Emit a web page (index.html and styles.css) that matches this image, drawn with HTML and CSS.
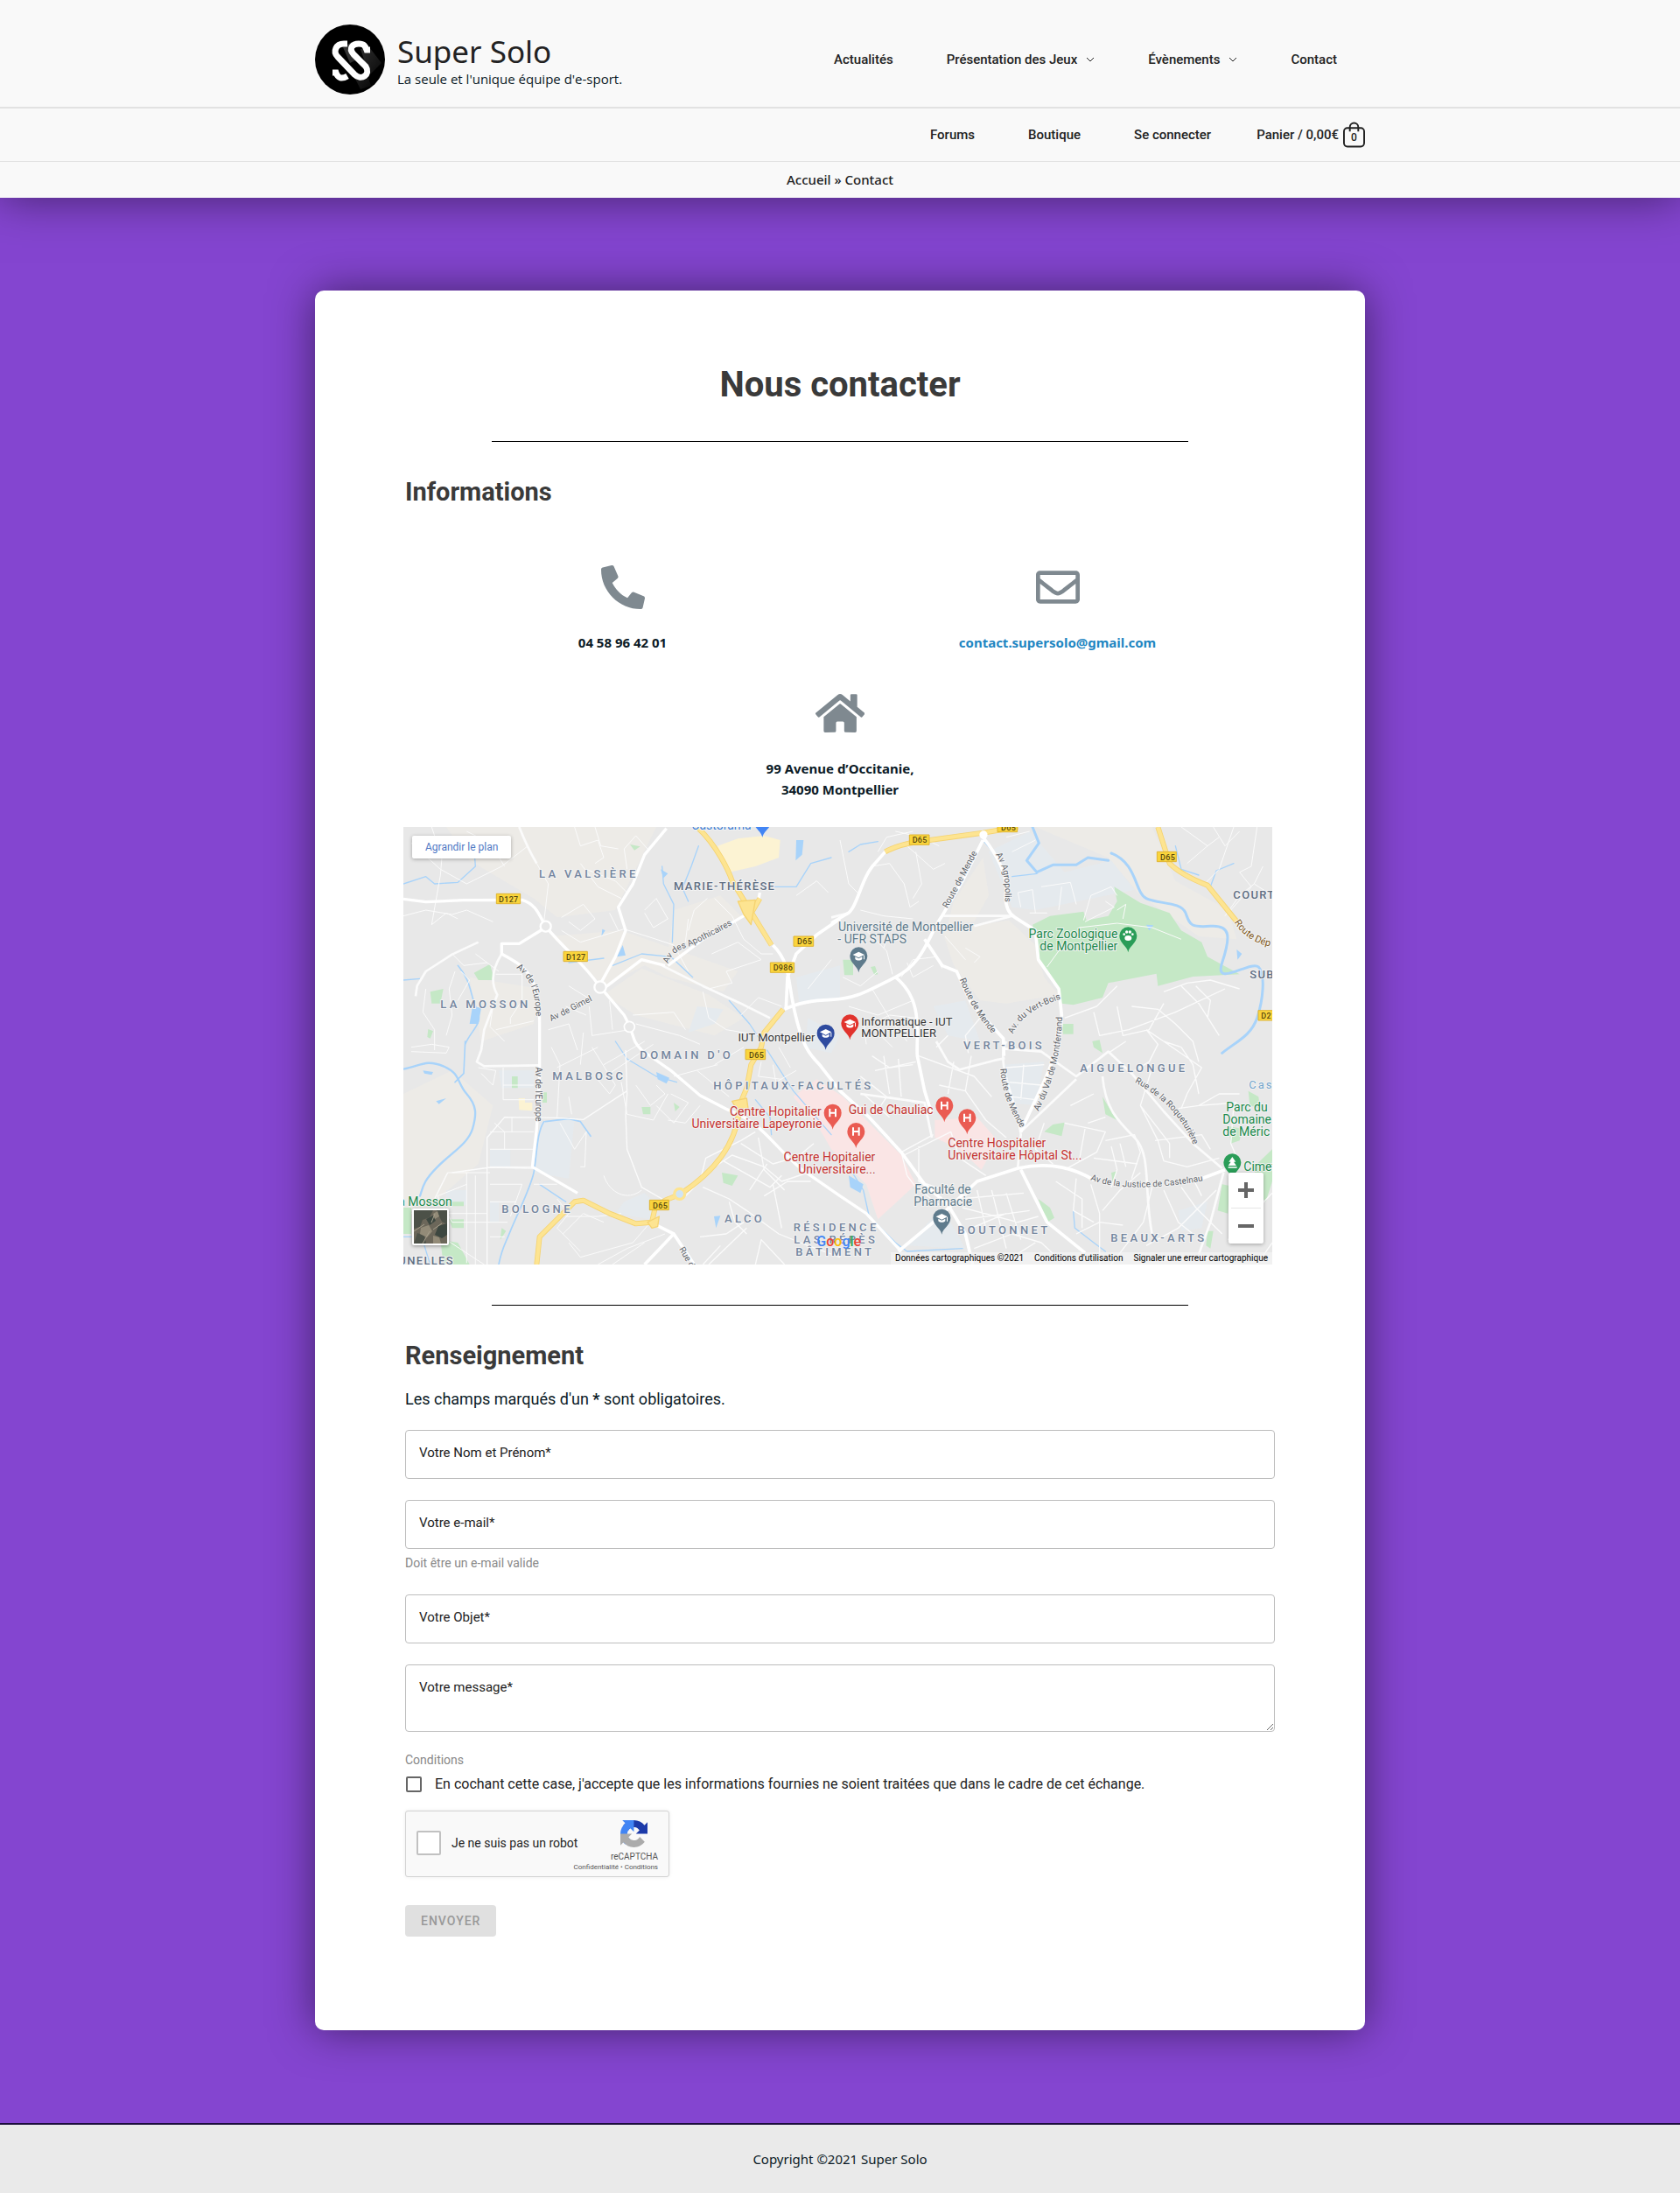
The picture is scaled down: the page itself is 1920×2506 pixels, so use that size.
FILE: index.html
```html
<!DOCTYPE html>
<html lang="fr">
<head>
<meta charset="utf-8">
<meta name="viewport" content="width=device-width, initial-scale=1">
<title>Contact – Super Solo</title>
<link rel="stylesheet" href="styles.css">
</head>
<body>
<header class="site-header">
  <div class="bar bar-main">
    <div class="wrap">
      <a class="brand" href="#">
        <svg class="brand-logo" viewBox="0 0 80 80" aria-hidden="true">
          <defs><linearGradient id="sheen" x1="0" y1="0" x2="1" y2="1"><stop offset=".2" stop-color="#555"/><stop offset="1" stop-color="#000"/></linearGradient></defs>
          <circle cx="40" cy="40" r="40"/>
          <path d="M32 26L42 20 48 40 40 44ZM52 28L62 26 76 44 62 58ZM46 62L60 58 64 70 52 74Z" fill="url(#sheen)" opacity=".6"/>
          <g fill="none" stroke="#fff" stroke-width="7">
            <path d="M37 22H33C24 22 20 31 26 37L45 57C53 65 64 57 58 48L44 34C38 27 43 22 50 22C56 22 57 24 59 29H63"/>
            <path d="M20 55H24C26 61 30 63 37 59"/>
          </g>
        </svg>
        <span class="brand-text"><span class="brand-name">Super Solo</span><span class="brand-tag">La seule et l'unique équipe d'e-sport.</span></span>
      </a>
      <nav class="menu" aria-label="Menu principal">
        <a href="#">Actualités</a>
        <a href="#">Présentation des Jeux <svg class="chevron" viewBox="0 0 10 10" aria-hidden="true"><path d="M1 3l4 4 4-4"/></svg></a>
        <a href="#">Évènements <svg class="chevron" viewBox="0 0 10 10" aria-hidden="true"><path d="M1 3l4 4 4-4"/></svg></a>
        <a href="#">Contact</a>
      </nav>
    </div>
  </div>
  <div class="bar bar-shop">
    <div class="wrap">
      <nav class="menu" aria-label="Menu secondaire">
        <a href="#">Forums</a>
        <a href="#">Boutique</a>
        <a href="#">Se connecter</a>
      </nav>
      <a class="cart" href="#">Panier / 0,00€
        <span class="bag"><svg viewBox="0 0 26 32" aria-hidden="true"><rect x="1" y="8" width="24" height="22" rx="4"/><path d="M8 12V7a5 5 0 0 1 10 0v5"/></svg><span class="bag-count">0</span></span>
      </a>
    </div>
  </div>
  <nav class="crumbs" aria-label="Fil d'Ariane"><a href="#">Accueil</a> » <span>Contact</span></nav>
</header>

<main class="page">
  <article class="card">
    <h1>Nous contacter</h1>
    <hr>
    <h2>Informations</h2>
    <div class="infos">
      <div class="info">
        <svg class="info-icon" viewBox="0 0 512 512" aria-hidden="true"><path d="M493.4 24.6l-104-24c-11.3-2.6-22.9 3.3-27.5 13.9l-48 112c-4.2 9.8-1.4 21.3 6.9 28l60.6 49.6c-36 76.7-98.9 140.5-177.2 177.2l-49.6-60.6c-6.8-8.3-18.2-11.1-28-6.9l-112 48C3.900 366.500-2 378.100.6 389.400l24 104C27.100 504.200 36.700 512 48 512c256.100 0 464-207.500 464-464 0-11.200-7.700-20.900-18.600-23.400z" transform="matrix(-1 0 0 1 512 0)"/></svg>
        <p>04 58 96 42 01</p>
      </div>
      <div class="info">
        <svg class="info-icon" viewBox="0 0 512 512" aria-hidden="true"><path d="M464 64H48C21.490 64 0 85.490 0 112v288c0 26.510 21.490 48 48 48h416c26.510 0 48-21.490 48-48V112c0-26.510-21.490-48-48-48zm0 48v40.805c-22.422 18.259-58.168 46.651-134.587 106.490-16.841 13.247-50.201 45.072-73.413 44.701-23.208.375-56.579-31.459-73.413-44.701C106.180 199.465 70.425 171.067 48 152.805V112h416zM48 400V214.398c22.914 18.251 55.409 43.862 104.938 82.646 21.857 17.205 60.134 55.186 103.062 54.955 42.717.231 80.509-37.199 103.053-54.947 49.528-38.783 82.032-64.401 104.947-82.653V400H48z"/></svg>
        <p><a href="mailto:contact.supersolo@gmail.com">contact.supersolo@gmail.com</a></p>
      </div>
      <address class="info info-wide">
        <svg class="info-icon" viewBox="0 0 576 512" aria-hidden="true"><path d="M280.370 148.260L96 300.110V464a16 16 0 0 0 16 16l112.060-.29a16 16 0 0 0 15.920-16V368a16 16 0 0 1 16-16h64a16 16 0 0 1 16 16v95.640a16 16 0 0 0 16 16.050L464 480a16 16 0 0 0 16-16V300L295.670 148.260a12.190 12.190 0 0 0-15.300 0zM571.600 251.470L488 182.560V44.050a12 12 0 0 0-12-12h-56a12 12 0 0 0-12 12v72.610L318.470 43a48 48 0 0 0-61 0L4.340 251.470a12 12 0 0 0-1.600 16.900l25.500 31A12 12 0 0 0 45.150 301l235.220-193.740a12.190 12.190 0 0 1 15.300 0L530.900 301a12 12 0 0 0 16.900-1.600l25.500-31a12 12 0 0 0-1.700-16.930z"/></svg>
        <p>99 Avenue d’Occitanie,<br>34090 Montpellier</p>
      </address>
    </div>

    <section class="map" aria-label="Plan d'accès">
      <svg class="map-canvas" viewBox="33 45 2979 1500" preserveAspectRatio="xMidYMid slice" role="img" aria-label="Carte de Montpellier">
        <defs>
          <path id="pin" d="M0 57C-4 34-30 26-30 0a30 30 0 1 1 60 0C30 26 4 34 0 57Z"/>
          <g id="cap"><path d="M0-14L20-4 0 6-20-4Z"/><path d="M-12 3L0 9 12 3V11C6 17-6 17-12 11ZM17-2h3v14h-3z"/></g>
          <path id="p-gimel" d="M540 712L690 636"/>
          <path id="p-apo" d="M940 514Q955 470 1010 456Q1090 420 1160 380"/>
          <path id="p-eur1" d="M420 528Q485 570 488 690"/>
          <path id="p-eur2" d="M486 868V1070"/>
          <path id="p-mende1" d="M1898 325Q1950 230 2002 130"/>
          <path id="p-agro" d="M2064 140Q2100 190 2096 300"/>
          <path id="p-mende2" d="M1940 568Q1985 680 2062 765"/>
          <path id="p-bois" d="M2124 755Q2150 680 2285 635"/>
          <path id="p-mont" d="M2210 1020Q2290 870 2292 680"/>
          <path id="p-mende3" d="M2080 874Q2085 980 2158 1090"/>
          <path id="p-roq" d="M2540 920Q2690 1000 2744 1140"/>
          <path id="p-cast" d="M2388 1255Q2520 1305 2790 1255"/>
          <path id="p-dep" d="M2882 372Q2930 450 3040 460"/>
          <path id="p-rue" d="M978 1492L1040 1600"/>
        </defs>
        <rect x="33" y="45" width="2979" height="1500" fill="#e8e8e8"/>
        <g fill="#edebe7">
          <path d="M180 45H900L810 230 760 330 560 355 480 290 260 160Z"/>
          <path d="M540 420L780 400 1180 540 1130 610 940 560 860 520 720 590Z"/>
          <path d="M960 330L1120 280 1190 350 940 480Z"/>
          <path d="M720 620L850 530 1080 620 1200 700 1100 760 830 690Z"/>
          <path d="M33 960L200 880 340 1000 290 1200 60 1400H33Z"/>
          <path d="M1880 400L2110 365 2200 450 2230 560 2280 620 2100 650 2010 640 1920 520Z"/>
          <path d="M2200 45H2600L2680 230 2860 330 2890 430 2760 420 2560 280 2450 150Z"/>
          <path d="M1920 300L2020 150 2040 280 1990 370 1900 380Z"/>
          <path d="M260 560L500 600 480 720 300 780Z"/>
        </g>
        <g fill="#e5eaee">
          <path d="M2040 130L2180 60 2300 200 2460 160 2540 260 2200 330 2120 320Z"/>
          <path d="M500 1060L620 1040 600 1250 480 1230Z"/>
          <path d="M330 1150H400V1210H330ZM180 1290H250V1340H180ZM330 1330H360V1400H330Z"/>
          <path d="M790 1330L860 1300 900 1340 880 1390 760 1370Z"/>
          <path d="M1380 560L1530 520V640L1390 650Z"/>
          <path d="M1850 660L1960 640 2010 780 1900 760Z"/>
          <path d="M2090 860L2230 850 2200 1000 2110 990Z"/>
          <path d="M1760 1480L1880 1350 1960 1490Z"/>
          <path d="M2690 1360L2790 1330 2770 1420 2700 1430Z"/>
          <path d="M1420 700L1530 760 1500 820 1410 800ZM1040 660L1130 670 1100 720 1010 750ZM360 880H480V940H370Z"/>
        </g>
        <g fill="#c5e8c6">
          <path d="M2470 250L2560 305 2660 340 2700 400 2770 440 2790 490 2900 550 2740 558 2620 590 2615 548 2450 580 2430 630 2330 655 2290 650 2270 590 2210 500 2205 440 2190 380 2250 350 2365 335 2375 365 2450 350 2480 300Z"/>
          <path d="M275 545L330 515 345 570 290 570ZM125 610L170 600 160 650 130 650ZM118 738L135 745 125 770 115 765ZM810 105L845 112 825 125Z"/>
          <path d="M1540 500H1575V553H1545ZM1635 525L1650 522 1660 550 1648 552ZM2290 720H2330V755H2295ZM2395 780L2420 775 2430 820 2400 800Z"/>
          <path d="M405 900H425V940H405ZM510 955H525V990H510ZM850 1005H880V1030H855ZM960 990L980 1005 965 1020ZM1125 1230L1180 1240 1160 1275 1130 1265Z"/>
          <path d="M33 1350H60V1440H33ZM180 1330H240V1345H180ZM160 1460L220 1470 260 1545H170ZM190 1390H240V1420H200ZM370 1420L385 1430 365 1460Z"/>
          <path d="M2430 970L2460 1020 2480 1050 2440 1030ZM2260 1065L2300 1058 2290 1105 2230 1090ZM2460 1230L2480 1225 2465 1265ZM2210 1320L2250 1350 2265 1385 2240 1400ZM2790 1430H2810L2800 1490 2785 1480Z"/>
          <path d="M2950 1210L3012 1150V1260L2990 1330 2960 1300ZM2840 1270L2865 1275 2860 1370 2825 1360ZM2860 1070L2910 1080 2900 1120 2870 1130ZM2930 950L2965 970 2970 1010 2935 1000Z"/>
        </g>
        <path d="M1370 970L1450 910 1540 970 1740 1170 1790 1270 1660 1390 1620 1270 1500 1150 1460 1080ZM1855 1050L2000 1040 2070 1120 2015 1220 1940 1150 1855 1110Z" fill="#fae5e5"/>
        <path d="M1110 110L1180 85 1270 75 1325 90 1320 150 1240 180 1150 200 1120 150ZM428 975L450 975 450 990 475 990 475 1018 430 1015Z" fill="#fcf3d3"/>
        <g fill="none" stroke="#a8d3fa" stroke-linejoin="round" stroke-linecap="round">
          <path stroke-width="9" d="M2190 45L2212 100 2170 160 2205 200 2260 175 2340 175 2380 150 2450 160M2460 135C2550 170 2540 270 2580 290S2700 300 2715 340 2730 390 2800 385 2870 420 2840 510 2940 500 2965 525 2980 640 2960 700 2890 780 2840 820 2835 875L2900 890 2940 895 2990 960 3000 1040 3012 1130"/>
          <path stroke-width="7" d="M33 875C90 865 110 840 170 865S215 920 250 960 285 1030 270 1080 200 1160 150 1210 100 1280 90 1310"/>
          <path stroke-width="5" d="M245 780L240 890 210 920M220 520C270 580 260 620 285 670S265 740 245 790M515 1055C490 1090 490 1180 480 1230S420 1380 400 1430 370 1490 360 1545M520 1055L600 1045 640 1055 675 1105"/>
          <path stroke-width="4" d="M33 240L110 215 140 240 220 235 280 180 275 110M33 570L90 565M920 180L925 240 960 310 955 440M1010 300L990 255 1020 180 1045 110M1290 250L1380 250 1430 170 1500 150M750 520L850 480 950 490 1025 560M600 510L720 495M1150 640L1220 720 1260 780M1560 130L1600 105 1660 95M2020 90L2080 160M2120 215L2205 205M2680 110L2700 190 2760 210M2800 250L2820 195 2880 170M1560 1210L1610 1290 1630 1380 1720 1470 1760 1500 1950 1490M2330 1360L2335 1420 2400 1470 2440 1500M1500 1100L1370 950 1280 810M760 780L800 840 900 900 970 920M500 1270L590 1330M33 1450H60M105 1480L125 1545M1240 980L1290 1040 1295 1100"/>
        </g>
        <path d="M1380 90H1405L1400 140 1378 160ZM270 660L300 665 290 720 260 720ZM785 450L795 485 765 490ZM2890 465L2908 480 2893 500ZM100 880L135 885 130 895 105 890ZM145 985L180 975 155 995ZM900 885L945 905 935 925 905 910ZM1560 1240L1610 1270 1600 1300 1565 1280ZM1098 1380L1120 1378 1105 1420ZM915 190L940 205 925 220ZM2580 380L2605 382 2590 400ZM715 395L725 400 712 420Z" fill="#a8d3fa"/>
        <g fill="none" stroke="#fbfbfb" stroke-linejoin="round">
          <path stroke-width="3" d="M130 45L165 150 160 210 130 380 180 340 220 360M60 100L160 190 250 240 330 200 370 180 460 110M380 180L330 100 250 60M490 170L530 240 515 370M575 355L650 310 690 360 640 400 600 370M620 45L640 110 700 90 720 150 690 170M640 170L700 250 780 290M660 190L760 230 800 270M690 45L710 110 770 120M800 190L790 120 830 75 870 120M740 340L770 400M33 350L110 330 200 345 250 330 340 370M575 400L640 440 790 395 900 430 960 450 1010 540M860 330L900 290 940 360 890 390 860 340M1010 360L1000 440M1075 290L1030 330 1010 400M1100 290L1160 350 1200 430 1260 480 1300 480M1090 480L1180 440 1260 500 1140 540 1160 580 1080 600M1380 280L1450 230 1490 270M1500 500L1420 600M280 480L360 540M200 480L240 520 320 510M110 600L100 680 140 740 140 810M210 540L190 600 200 690 180 760M220 640L260 570 230 540M350 550L440 550 440 640 400 700 400 720M350 740L480 710M340 660L330 730 380 780M600 590L680 640M590 660L660 690M670 660L680 760 810 740M740 640L750 740M530 740L600 720 630 810M650 750L640 860M820 690L960 680 1000 740M830 720L980 760 1050 790M1060 610L1080 700 1140 740 1260 760M1190 690L1250 630 1330 660"/>
          <path stroke-width="3" d="M60 800L130 790 190 800 180 820 60 815M290 870L350 880 340 930 300 890M375 870V980H480M375 930H480M540 800L570 860 560 1040M560 870L700 800M600 970L610 1030M680 800L760 930 740 960 690 900M720 860L860 780M740 890L890 790M780 920L800 1030 890 1050 940 960M830 930L880 1000 930 960 900 930M900 1000L960 1060 1010 990 950 960M940 1050L1000 1060 1050 1000M960 900L1110 860M1040 880L1150 970M1100 860L1200 800M1260 850L1250 900 1330 910M1300 860L1310 920 1380 880M1320 800L1360 870M570 1060L620 1150 660 1090 655 1210 640 1210M330 1090L480 1090M345 1060L380 1090 380 1150M405 1040V1090M330 1150H480M330 1210H470M185 1230H330M250 1230V1540M150 1310L250 1270M150 1310L200 1400H330M60 1370H320M280 1240V1545M330 1270L440 1270 400 1380M330 1330H420M330 1400H390M330 1450H380M180 1460L310 1545M480 1270H560M590 1380L700 1380 780 1370M580 1440L650 1370 720 1400M600 1470L640 1520 820 1470 880 1400M700 1545L800 1490 930 1440M750 1545L860 1470M560 1320L600 1370 560 1420 640 1500M720 1240C740 1300 800 1330 850 1290"/>
          <path stroke-width="4" d="M795 810L800 960 795 1030 800 1150 850 1280 920 1320M320 1545L320 1110 380 1040 560 1042 650 1048 800 950M185 1230L150 1300 140 1320M200 1230L330 1212 480 1215M1000 1310L1050 1260 1070 1180 1190 1120 1240 1090M1060 1280L1150 1320 1210 1360 1320 1440 1420 1480 1530 1520M1150 1330L1170 1400 1210 1440M1100 1210L1160 1170 1270 1210 1330 1260 1420 1230M1130 1190L1290 1280 1330 1240M1190 1130L1300 1200 1370 1180M1220 1290L1280 1200M1250 1110L1270 1220 1340 1290M1270 1310L1350 1260 1430 1260M1380 1180L1440 1130M1300 1270L1330 1420M1210 1420L1080 1545M1050 1450L1140 1440 1200 1400M1060 1545L1120 1480M1240 1545L1260 1460 1340 1545"/>
          <path stroke-width="3" d="M1530 90L1560 240 1590 270M1640 180L1700 170 1750 240 1770 320 1800 300M1660 130L1690 80 1780 60M1720 60L1810 80 1870 110M1760 110L1850 190 1890 170M1790 130L1810 240 1780 290M1600 330L1680 350 1780 360M1620 400L1690 470 1710 550M1700 400L1680 460M1740 560L1780 500 1860 490 1880 530M1760 510L1780 560 1850 520M1890 420L1960 500M1960 460L2010 490 1990 510M1540 560L1600 590 1660 540M1640 600L1700 700 1760 780M1560 660L1660 690 1780 640M1640 720L1700 690 1790 700M1610 700L1620 790M1660 750L1710 800M2100 80L2180 60M2120 130L2200 90M2150 320L2140 270 2190 260 2200 340M2220 250L2320 235 2340 310M2290 250L2280 330M2180 340H2240M2365 365L2390 280 2460 250 2480 280M2370 370L2470 320 2440 300M2350 390L2480 375 2600 390 2700 430M2240 525L2280 470 2300 460M2500 360L2510 310 2480 330M2700 45L2790 110 2720 170M2790 110L2830 80M2810 45L2850 110 2900 60M2880 45L2830 190 2780 240M2850 350L2900 280 2950 240M2960 45L2940 180 2900 200 2940 250 2870 330M2980 180L2950 240 3012 280"/>
          <path stroke-width="4" d="M2300 700L2410 660 2480 590M2400 680L2420 760 2520 740 2680 680 2850 600M2480 660L2500 760 2590 740 2640 650M2530 660L2620 670 2680 720 2740 780 2760 850M2580 740L2640 780 2700 800M2700 590L2760 650 2830 760M2750 590L2800 640 2790 700M2640 610L2720 580 2800 570 2900 600M2640 780L2770 870 2720 960 2700 1010M2700 800L2740 860 2760 960M2510 780L2450 820M2580 740L2620 790 2590 850 2540 880M2010 700L1960 760 1970 820M1860 800L1900 760M1640 830L1700 870 1780 860M1650 880L1790 850M1680 830L1700 960M1730 840L1740 970M1600 900L1690 970 1800 990M1610 960L1700 1040M1640 930L1690 970 1670 1000M1800 830L1990 900 2050 970M1870 930L1960 950 2030 1050 2100 1110M1920 850L1900 960M1980 830L1960 950M1850 1100L1740 1160 1760 1240M1750 1170L1910 1090 1940 1180 2030 1240M1800 1140V1260L1890 1290M2100 870L2230 860M2110 920L2220 930M2120 970L2200 980M2160 860L2150 980"/>
          <path stroke-width="4" d="M2300 1060L2440 1090 2410 1160 2300 1220M2230 1060L2200 1150 2260 1200M2320 1000L2400 960M2370 1080L2350 1190M2440 1120L2540 1100 2560 1160 2530 1250M2400 1180L2550 1200M2460 1140L2480 1220 2460 1280M2490 1130L2510 1210M2380 1060L2440 1040M2340 1250L2330 1360 2400 1400M2390 1270L2420 1370 2420 1545M2270 1260L2360 1320 2360 1420M2600 870L2560 1000 2620 1120 2640 1190 2720 1210 2830 1180M2560 1000L2660 1130 2660 1180M2610 1120L2770 1100 2800 1150M2690 1010L2760 1000 2890 990M2760 1000L2830 960 2900 960M2880 1000L2870 1130 2900 1200M2600 1280L2570 1400 2460 1545M2560 1230L2490 1290 2430 1360M2580 1480L2690 1420 2820 1290M2640 1290L2690 1400 2740 1440M2700 1280L2750 1350 2840 1440M2740 1250L2770 1310M1940 1320L2160 1300M1950 1350L2140 1400 2210 1380M1960 1390L2180 1360M1980 1420L2100 1370M2000 1290L2030 1420M2050 1290L2100 1490M2100 1300L2150 1460M1940 1330L1980 1290M1870 1340L1790 1280 1760 1240M1990 1490L2120 1440 2220 1470 2300 1545M2080 1545L2200 1470M2500 1410L2420 1400 2340 1440M2860 1460L3012 1300M2960 1545L3012 1470"/>
          <path stroke-width="8" d="M290 440L200 482 110 540 80 590 75 625M430 45Q460 120 490 170M920 520L1060 590 1200 655 1290 700M370 480Q320 560 355 620L310 740 300 810 285 850 310 865 500 862M1885 350L2120 350M2120 350L1990 385M1500 355L1560 340M1860 780L1900 850 1940 877 2060 845 2095 838M2090 805L2220 815 2340 900 2450 815 2530 890 2640 1020 2740 1130 2840 1215M2430 900C2440 1010 2480 1050 2540 1110S2570 1290 2600 1440M2150 1090L2340 910M2100 780C2060 860 2140 990 2150 1100L2140 1210M2845 1230L2800 1400 2760 1510M1600 960L1820 990 1845 1110"/>
          <path stroke-width="10" stroke="#fff" d="M33 292L110 302 240 296 440 295C490 310 500 350 520 385M520 385C600 480 640 500 705 590L790 690C830 760 810 770 850 810L950 880 1050 965 1140 1012C1270 1060 1290 1130 1400 1220L1530 1310 1620 1370 1740 1500M935 50L860 140 820 240 770 320 795 400 760 490 710 580M520 390L430 445H370V480C440 520 500 540 500 720V900L490 1080 475 1210 630 1300M705 610L850 500 930 520M940 520L1060 430 1200 350 1250 300 1255 270"/>
          <path stroke-width="11" stroke="#fff" d="M1300 450C1360 510 1350 570 1375 680S1420 820 1460 860L1530 950 1630 1040 1740 1160 1820 1270 1900 1340 1960 1440 1985 1545M1530 360L1450 415 1380 480 1350 560 1345 665M1340 670Q1400 640 1500 637C1580 635 1620 610 1720 560S1830 420 1880 350L1950 230 2020 90M1500 375L1550 345C1590 330 1600 220 1650 170L1685 130M2020 80Q2100 180 2100 260 2090 330 2130 355L2200 400 2210 500 2280 600 2290 690C2290 830 2200 970 2150 1090M1820 430L1880 520 1930 540 1980 650 2090 770 2092 830M1720 560C1820 640 1790 760 1795 830L1820 950 1845 1030M1730 1500L1850 1400 2000 1260 2140 1215C2260 1190 2340 1220 2400 1255M2770 1250L2850 1220M2150 1220L2240 1400 2370 1505M880 1400L960 1440 1030 1545M960 1440L860 1545"/>
        </g>
        <g fill="none" stroke-linejoin="round">
          <path stroke="#f5d371" stroke-width="18" d="M1040 45C1110 110 1150 200 1160 230L1215 320 1295 450M1255 290L1220 350M1335 670L1270 750 1260 800 1225 860 1210 940 1185 1000C1180 1140 1080 1240 980 1305L930 1325 895 1355 885 1400 830 1405 740 1370 650 1325 620 1330 500 1450 490 1545M1685 130Q1730 105 1800 95L2020 65 2140 45M2620 45L2660 170Q2700 210 2790 245L2895 375"/>
          <path stroke="#fde491" stroke-width="13" d="M1040 45C1110 110 1150 200 1160 230L1215 320 1295 450M1255 290L1220 350M1335 670L1270 750 1260 800 1225 860 1210 940 1185 1000C1180 1140 1080 1240 980 1305L930 1325 895 1355 885 1400 830 1405 740 1370 650 1325 620 1330 500 1450 490 1545M1685 130Q1730 105 1800 95L2020 65 2140 45M2620 45L2660 170Q2700 210 2790 245L2895 375"/>
          <path stroke="#f5d371" fill="#fde491" stroke-width="4" d="M1180 300L1240 295 1225 380 1200 345ZM1160 985L1210 975 1215 1010 1180 1020ZM870 1400L910 1380 905 1415 885 1420Z"/>
          <circle cx="980" cy="1303" r="18" stroke="#fde491" stroke-width="10" fill="#cfe4f5"/>
          <circle cx="521" cy="386" r="18" stroke="#fff" stroke-width="7" fill="#e8e8e8"/>
          <circle cx="708" cy="594" r="20" stroke="#fff" stroke-width="7" fill="#e8e8e8"/>
          <circle cx="808" cy="730" r="18" stroke="#fff" stroke-width="5" fill="#e8e8e8"/>
          <circle cx="2022" cy="72" r="14" fill="#fff"/>
        </g>
        <g fill="#fad53c" stroke="#dfb432" stroke-width="3">
          <path d="M352 274h82v34h-82zM582 472h82v34h-82zM1371 420h68v34h-68zM1291 510h82v34h-82zM1768 72h68v34h-68zM2070 30h68v32h-68zM2617 130h66v34h-66zM2964 674h66v34h-66zM1206 808h68v34h-68zM877 1324h66v34h-66z"/>
        </g>
        <g class="lbl-road">
          <text x="360" y="302">D127</text><text x="591" y="500">D127</text><text x="1383" y="448">D65</text><text x="1301" y="538">D986</text>
          <text x="1778" y="100">D65</text><text x="2082" y="56">D65</text><text x="2628" y="158">D65</text><text x="2974" y="702">D21</text>
          <text x="1218" y="836">D65</text><text x="888" y="1352">D65</text>
        </g>
        <g class="lbl-street">
          <text><textPath href="#p-gimel">Av de Gimel</textPath></text>
          <text><textPath href="#p-apo">Av des Apothicaires</textPath></text>
          <text><textPath href="#p-eur1">Av de l'Europe</textPath></text>
          <text><textPath href="#p-eur2">Av de l'Europe</textPath></text>
          <text><textPath href="#p-mende1">Route de Mende</textPath></text>
          <text><textPath href="#p-agro">Av Agropolis</textPath></text>
          <text><textPath href="#p-mende2">Route de Mende</textPath></text>
          <text><textPath href="#p-bois">Av. du Vert-Bois</textPath></text>
          <text><textPath href="#p-mont">Av du Val de Montferrand</textPath></text>
          <text><textPath href="#p-mende3">Route de Mende</textPath></text>
          <text><textPath href="#p-roq">Rue de la Roqueturière</textPath></text>
          <text><textPath href="#p-cast">Av de la Justice de Castelnau</textPath></text>
          <text><textPath href="#p-rue">Rue de</textPath></text>
          <text class="brown"><textPath href="#p-dep">Route Dép</textPath></text>
        </g>
        <g class="lbl-area">
          <text x="498" y="219">LA VALSIÈRE</text>
          <text x="160" y="666">LA MOSSON</text>
          <text x="844" y="840">DOMAIN D'O</text>
          <text x="544" y="912">MALBOSC</text>
          <text x="1096" y="946">HÔPITAUX-FACULTÉS</text>
          <text x="370" y="1368">BOLOGNE</text>
          <text x="1134" y="1402">ALCO</text>
          <text x="1370" y="1431">RÉSIDENCE</text>
          <text x="1372" y="1473">LAS RÉPÈS</text>
          <text x="1378" y="1515">BÂTIMENT</text>
          <text x="1953" y="807">VERT-BOIS</text>
          <text x="2353" y="885">AIGUELONGUE</text>
          <text x="1933" y="1440">BOUTONNET</text>
          <text x="2458" y="1467">BEAUX-ARTS</text>
          <g class="town">
            <text x="960" y="260">MARIE-THÉRÈSE</text>
            <text x="2878" y="290">COURTARELLE</text>
            <text x="2935" y="563">SUBSTANTION</text>
            <text x="207" y="1544" text-anchor="end">BRUNELLES</text>
          </g>
          <text class="soft" x="2932" y="942">Cast</text>
        </g>
        <g class="lbl-place">
          <g fill="#5f7b8c"><text x="1524" y="402">Université de Montpellier</text><text x="1522" y="443">- UFR STAPS</text><text x="1786" y="1302">Faculté de</text><text x="1783" y="1344">Pharmacie</text></g>
          <g fill="#1b8a4c"><text x="2482" y="425" text-anchor="end">Parc Zoologique</text><text x="2482" y="468" text-anchor="end">de Montpellier</text><text x="2854" y="1020">Parc du</text><text x="2842" y="1062">Domaine</text><text x="2842" y="1104">de Méric</text><text x="2914" y="1223">Cimetière</text><text x="200" y="1343" text-anchor="end">La Mosson</text></g>
          <g fill="#c5322f"><text x="1466" y="1034" text-anchor="end">Centre Hopitalier</text><text x="1468" y="1077" text-anchor="end">Universitaire Lapeyronie</text><text x="1651" y="1191" text-anchor="end">Centre Hopitalier</text><text x="1652" y="1233" text-anchor="end">Universitaire...</text><text x="1850" y="1028" text-anchor="end">Gui de Chauliac</text><text x="1900" y="1143">Centre Hospitalier</text><text x="1900" y="1184">Universitaire Hôpital St...</text></g>
          <g class="near" fill="#333"><text x="1444" y="780" text-anchor="end">IUT Montpellier</text><text x="1603" y="725">Informatique - IUT</text><text x="1603" y="766">MONTPELLIER</text></g>
          <text x="1226" y="54" text-anchor="end" fill="#3f7fd4">Castorama</text>
        </g>
        <use href="#pin" x="1264" y="24" fill="#4285f4"/>
        <use href="#pin" x="1481" y="752" fill="#2f4b9f"/>
        <use href="#pin" x="1564" y="718" fill="#e1332d"/>
        <g fill="#5f7b8c"><use href="#pin" x="1594" y="487"/><use href="#pin" x="1879" y="1385"/></g>
        <g fill="#2a9d58"><use href="#pin" x="2518" y="418"/><use href="#pin" x="2875" y="1195"/></g>
        <g fill="#ea5b52"><use href="#pin" x="1505" y="1025"/><use href="#pin" x="1585" y="1089"/><use href="#pin" x="1888" y="1000"/><use href="#pin" x="1966" y="1042"/></g>
        <g fill="#fff">
          <use href="#cap" x="1481" y="752"/><use href="#cap" x="1564" y="718"/><use href="#cap" x="1594" y="487"/><use href="#cap" x="1879" y="1385"/>
          <path d="M2875 1176l12 17h-7l9 13h-28l9-13h-7zM2861 1210h30v4h-30z"/>
          <ellipse cx="2518" cy="426" rx="12" ry="9"/><circle cx="2504" cy="413" r="4"/><circle cx="2513" cy="405" r="5"/><circle cx="2524" cy="405" r="5"/><circle cx="2533" cy="413" r="4"/>
        </g>
        <path fill="none" stroke="#fff" stroke-width="6" d="M1495 1011v28M1515 1011v28M1495 1025h20M1575 1075v28M1595 1075v28M1575 1089h20M1878 986v28M1898 986v28M1878 1000h20M1956 1028v28M1976 1028v28M1956 1042h20"/>
        <text class="google" x="1450" y="1481"><tspan fill="#4285f4">G</tspan><tspan fill="#ea4335">o</tspan><tspan fill="#fbbc05">o</tspan><tspan fill="#4285f4">g</tspan><tspan fill="#34a853">l</tspan><tspan fill="#ea4335">e</tspan></text>
      </svg>
      <a class="map-open" href="#">Agrandir le plan</a>
      <button class="map-sat" type="button" aria-label="Vue satellite">
        <svg viewBox="0 0 38 38" aria-hidden="true"><rect width="38" height="38" fill="#6c675a"/><path fill="#4c5148" d="M0 0h22l-4 8-8 3-3 8-7 2zM26 0h12v16l-6-3-4-8zM4 26l8 3 2 9H0z"/><path fill="#3d4740" d="M28 18l10-3v13l-6 4-8-4zM14 10l8-4 3 6-7 5z"/><path fill="#938b78" d="M8 20l9-3 4 7-6 7-8-4zM22 4l5-3 2 6-5 3zM22 29l7 2 2 7h-9z"/><path stroke="#a59e8b" fill="none" d="M0 24l12-8M22 22l10-7M10 38l8-14M24 4l-4 10"/></svg>
      </button>
      <div class="map-zoom">
        <button type="button" aria-label="Zoom avant"><svg viewBox="0 0 18 18" aria-hidden="true"><path d="M9 0v18M0 9h18"/></svg></button>
        <button type="button" aria-label="Zoom arrière"><svg viewBox="0 0 18 18" aria-hidden="true"><path d="M0 9h18"/></svg></button>
      </div>
      <div class="map-legal"><span>Données cartographiques ©2021</span><a href="#">Conditions d'utilisation</a><a href="#">Signaler une erreur cartographique</a></div>
    </section>

    <hr>
    <h2>Renseignement</h2>
    <p class="lead">Les champs marqués d'un <b>*</b> sont obligatoires.</p>
    <form class="form">
      <div class="field"><label for="nom">Votre Nom et Prénom*</label><input id="nom" type="text" required></div>
      <div class="field"><label for="mail">Votre e-mail*</label><input id="mail" type="email" aria-describedby="aide" required></div>
      <p class="help" id="aide">Doit être un e-mail valide</p>
      <div class="field"><label for="objet">Votre Objet*</label><input id="objet" type="text" required></div>
      <div class="field"><label for="message">Votre message*</label><textarea id="message" required></textarea></div>
      <fieldset class="terms">
        <legend>Conditions</legend>
        <label class="check"><input type="checkbox" required> En cochant cette case, j'accepte que les informations fournies ne soient traitées que dans le cadre de cet échange.</label>
      </fieldset>
      <div class="captcha">
        <label class="captcha-check"><input type="checkbox"> Je ne suis pas un robot</label>
        <div class="captcha-brand">
          <svg class="captcha-logo" viewBox="0 0 64 64" aria-hidden="true"><path fill="#1c3aa9" d="M64 31.955l-.033-1.370V4.687l-7.160 7.160C50.948 4.674 42.033.093 32.050.093c-10.400 0-19.622 4.960-25.458 12.640l11.736 11.860a15.550 15.550 0 0 1 4.754-5.334c2.050-1.600 4.952-2.906 8.968-2.906.485 0 .86.057 1.135.163 4.976.393 9.288 3.140 11.828 7.124l-8.307 8.307L64 31.953"/><path fill="#4285f4" d="M31.862.094l-1.370.033H4.594l7.160 7.160C4.580 13.147 0 22.060 0 32.046c0 10.400 4.960 19.622 12.640 25.458L24.500 45.768a15.550 15.550 0 0 1-5.334-4.754c-1.600-2.050-2.906-4.952-2.906-8.968 0-.485.057-.86.163-1.135.393-4.976 3.140-9.288 7.124-11.828l8.307 8.307L31.860.095"/><path fill="#ababab" d="M.001 32.045l.033 1.370v25.898l7.160-7.160c5.860 7.173 14.774 11.754 24.760 11.754 10.400 0 19.622-4.960 25.458-12.640l-11.736-11.860a15.550 15.550 0 0 1-4.754 5.334c-2.050 1.600-4.952 2.906-8.968 2.906-.485 0-.86-.057-1.135-.163-4.976-.393-9.288-3.140-11.828-7.124l8.307-8.307c-10.522.04-22.400.066-27.295-.005"/></svg>
          <span class="captcha-name">reCAPTCHA</span>
          <span class="captcha-links"><a href="#">Confidentialité</a> • <a href="#">Conditions</a></span>
        </div>
      </div>
      <button class="send" type="submit" disabled>ENVOYER</button>
    </form>
  </article>
</main>

<footer class="site-footer">Copyright ©2021 Super Solo</footer>
</body>
</html>
```
FILE: styles.css
```css
*, *::before, *::after { box-sizing: border-box; }

body {
  margin: 0;
  background: #8445d0;
  color: #0b1a26;
  font-family: Roboto, sans-serif;
}

a { color: inherit; text-decoration: none; }
h1, h2, p { margin: 0; }

.wrap {
  display: flex;
  align-items: center;
  width: 100%;
  max-width: 1200px;
  margin: 0 auto;
}

/* header */
.site-header {
  position: relative;
  background: #f9f9f9;
  box-shadow: 0 0 50px rgba(0, 0, 0, .5);
}
.bar { display: flex; border-bottom: 1px solid #e2e2e2; }
.bar-main { padding: 28px 0 14px; border-bottom-width: 2px; }
.bar-main .wrap { justify-content: space-between; }
.bar-shop { min-height: 61px; }
.bar-shop .wrap { justify-content: flex-end; }

.brand { display: flex; align-items: center; gap: 14px; }
.brand-logo { width: 80px; height: 80px; }
.brand-text { display: flex; flex-direction: column; padding-top: 2px; }
.brand-name { font: 35px/42px "Noto Sans", sans-serif; color: #222; }
.brand-tag { font: 15px/20px "Open Sans", sans-serif; color: #0b1a26; }

.menu {
  display: flex;
  padding-right: 1px;
  font-size: 15px;
  font-weight: 500;
  line-height: 24px;
  color: #222;
}
.menu a { display: flex; align-items: center; padding: 0 31px 0 30px; }
.chevron { width: 10px; height: 10px; margin-left: 10px; fill: none; stroke: #222; stroke-width: 1; }

.cart {
  display: flex;
  align-items: center;
  gap: 5px;
  padding-left: 20px;
  font-size: 15px;
  font-weight: 500;
  color: #222;
}
.bag { position: relative; width: 25px; height: 32px; }
.bag svg { display: block; width: 25px; height: 32px; fill: none; stroke: #222; stroke-width: 2; }
.bag-count { position: absolute; inset: 8px 0 0; text-align: center; font-size: 12px; line-height: 22px; }

.crumbs {
  padding: 8px 0 9px;
  text-align: center;
  font: 500 15px/24px "Noto Sans", sans-serif;
  color: #222;
}

/* card */
.page { padding: 106px 20px; }
.card {
  max-width: 1200px;
  margin: 0 auto;
  padding: 82px 103px 107px;
  background: #fff;
  border-radius: 10px;
  box-shadow: 0 0 50px rgba(0, 0, 0, .5);
}
h1 { font-size: 40px; line-height: 52px; font-weight: 700; text-align: center; color: #3a3a3a; }
h2 { font-size: 29px; line-height: 40px; font-weight: 700; color: #3a3a3a; }
hr { width: 80%; height: 1px; margin: 38px auto 37px; border: 0; background: #000; }

.infos {
  display: grid;
  grid-template-columns: 1fr 1fr;
  row-gap: 44px;
  padding-top: 64px;
}
.info {
  display: flex;
  flex-direction: column;
  align-items: center;
  gap: 26px;
  text-align: center;
  font: 700 15px/24px "Noto Sans", sans-serif;
}
.info a { color: #1e86c2; }
.info-wide { grid-column: 1 / -1; }
.info-icon { height: 50px; fill: #7f8990; }

/* map */
.map { position: relative; height: 500px; margin: 31px 3px 46px -2px; overflow: hidden; }
.map-canvas { display: block; width: 100%; height: 100%; font-family: Roboto, sans-serif; }
.map-canvas text { paint-order: stroke; stroke: #f3f3f3; stroke-width: 6px; stroke-linejoin: round; }
.map-canvas .lbl-road text { font-size: 27px; font-weight: 500; fill: #55450f; stroke: none; letter-spacing: 1px; }
.lbl-street text { font-size: 30px; fill: #5c6167; }
.map-canvas .brown { font-size: 33px; fill: #7d5514; }
.lbl-area text { font-size: 39px; font-weight: 500; letter-spacing: 10px; fill: #73859e; }
.map-canvas .town text { letter-spacing: 4px; fill: #5f6e83; }
.map-canvas .soft { font-weight: 400; letter-spacing: 6px; fill: #74a5cc; }
.lbl-place text { font-size: 42px; }
.lbl-place .near text { font-size: 39px; }
.map-canvas .google { font-size: 48px; font-weight: 500; stroke: none; }

.map-open {
  position: absolute;
  top: 10px;
  left: 10px;
  padding: 0 15px;
  background: #fff;
  border-radius: 2px;
  box-shadow: 0 1px 4px rgba(0, 0, 0, .3);
  font-size: 12px;
  line-height: 26px;
  color: #5079c4;
}
.map-sat {
  position: absolute;
  left: 10px;
  bottom: 22px;
  width: 42px;
  height: 42px;
  padding: 2px;
  border: 0;
  border-radius: 2px;
  background: #fff;
  box-shadow: 0 1px 4px rgba(0, 0, 0, .4);
}
.map-sat svg { display: block; }
.map-zoom {
  position: absolute;
  right: 10px;
  bottom: 24px;
  width: 40px;
  padding: 0 3px;
  background: #fff;
  border-radius: 2px;
  box-shadow: 0 1px 4px rgba(0, 0, 0, .3);
}
.map-zoom button { display: grid; place-items: center; width: 100%; height: 40px; padding: 0; border: 0; background: none; }
.map-zoom button + button { height: 41px; border-top: 1px solid #e6e6e6; }
.map-zoom svg { width: 18px; height: 18px; stroke: #666; stroke-width: 4; }
.map-legal {
  position: absolute;
  right: 0;
  bottom: 0;
  display: flex;
  gap: 12px;
  padding: 0 5px;
  background: rgba(245, 245, 245, .7);
  font-size: 10px;
  line-height: 14px;
  color: #000;
}

/* form */
.lead { margin-top: 16px; font-size: 18px; line-height: 28px; }
.form { display: flex; flex-direction: column; padding-top: 21px; color: #222; }
.field { position: relative; display: flex; margin-bottom: 24px; }
.field label { position: absolute; top: 16px; left: 16px; font-size: 15px; line-height: 20px; }
.field input, .field textarea {
  width: 100%;
  height: 56px;
  padding: 12px 15px;
  border: 1px solid #bdbdbd;
  border-radius: 4px;
  background: #fff;
  font: 15px/20px Roboto, sans-serif;
}
.field textarea { height: 77px; resize: vertical; }
.help { margin: -18px 0 26px; font-size: 14px; line-height: 20px; color: #888; }

.terms { margin: -2px 0 18px; padding: 0; border: 0; }
.terms legend { padding: 0 0 6px; font-size: 14px; line-height: 20px; color: #888; }
.check { display: flex; align-items: center; gap: 15px; font-size: 16px; line-height: 24px; }
.check input { appearance: none; width: 18px; height: 18px; margin: 0 0 0 1px; border: 2px solid #666; border-radius: 2px; }

.captcha {
  display: flex;
  justify-content: space-between;
  width: 302px;
  height: 76px;
  padding: 10px 12px 4px;
  border: 1px solid #d3d3d3;
  border-radius: 3px;
  background: #f9f9f9;
  box-shadow: 0 0 4px rgba(0, 0, 0, .08);
  white-space: nowrap;
}
.captcha-check { display: flex; align-items: center; gap: 12px; font-size: 14px; padding-bottom: 8px; }
.captcha-check input { appearance: none; width: 28px; height: 28px; margin: 0; border: 2px solid #c1c1c1; border-radius: 2px; background: #fff; }
.captcha-brand { display: flex; flex-direction: column; align-items: flex-end; width: 0; color: #555; }
.captcha-logo { flex: none; width: 31px; height: 31px; margin-right: 12px; }
.captcha-name { padding-top: 4px; font-size: 10px; line-height: 14px; }
.captcha-links { font-size: 8px; line-height: 10px; }

.send {
  align-self: flex-start;
  height: 36px;
  margin-top: 32px;
  padding: 0 18px;
  border: 0;
  border-radius: 4px;
  background: #e0e0e0;
  font: 500 14px/36px Roboto, sans-serif;
  letter-spacing: 1px;
  color: #999;
}

/* footer */
.site-footer {
  padding: 27px 0;
  border-top: 2px solid #1b0c3c;
  background: #eaeaea;
  text-align: center;
  font: 15px/24px "Noto Sans", sans-serif;
}
```
